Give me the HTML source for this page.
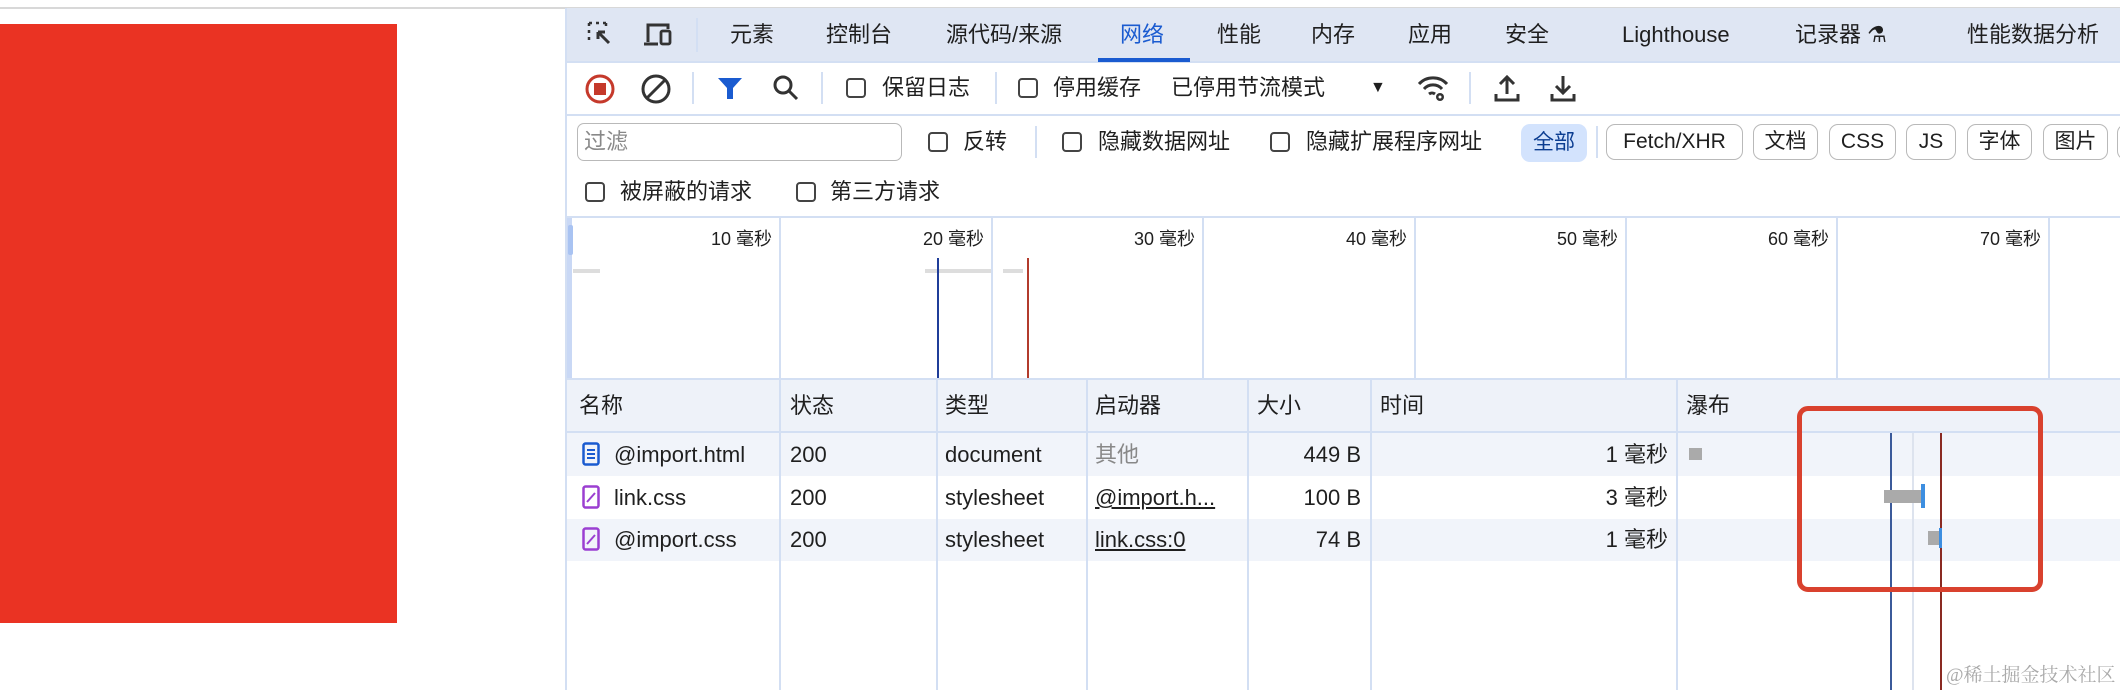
<!DOCTYPE html>
<html><head><meta charset="utf-8"><style>
*{margin:0;padding:0;box-sizing:border-box}
body{width:2120px;height:690px;overflow:hidden;background:#fff;position:relative;font-family:"Liberation Sans","Noto Sans CJK SC",sans-serif;color:#1f1f1f}
.a{position:absolute;white-space:nowrap}
.t{font-size:22px;line-height:30px}
.cb{position:absolute;width:20px;height:20px;border:2px solid #444;border-radius:4px;background:#fff}
.chip{position:absolute;top:124px;height:36px;border:1.5px solid #b9b9b9;border-radius:9px;font-size:21px;line-height:33px;text-align:center}
.vl{position:absolute;width:1.5px;background:#d3dff3}
.hl{position:absolute;height:2px;background:#d3dff3}
.sep{position:absolute;width:2px;background:#d3dff3}
.tl{position:absolute;top:225px;font-size:18px;text-align:right;width:120px}
</style></head><body>
<div class="hl" style="left:0;top:7px;width:2120px;height:1.5px;background:#d8d8d8"></div>
<div class="a" style="left:0;top:24px;width:397px;height:599px;background:#ea3323"></div>
<!-- devtools -->
<div class="a" style="left:565px;top:8px;width:1555px;height:682px;background:#fff;border-left:2px solid #d3dff3"></div>
<div class="a" style="left:567px;top:8px;width:1553px;height:54px;background:#dfe6f3"></div>
<div class="hl" style="left:567px;top:61px;width:1553px"></div>
<!-- tab icons -->
<svg class="a" style="left:586px;top:20px" width="30" height="30" viewBox="0 0 30 30"><path d="M3 3h3M10 3h3M17 3h3M3 3v3M3 10v3M3 17v3M20 3v3" stroke="#333" stroke-width="2.5" fill="none" stroke-dasharray="none"/><path d="M12 12l11 11M12 12h7M12 12v7" stroke="#333" stroke-width="3" fill="none"/></svg>
<svg class="a" style="left:642px;top:20px" width="32" height="30" viewBox="0 0 32 30"><path d="M6 22V5h20v4" stroke="#333" stroke-width="3" fill="none"/><path d="M2 24h14" stroke="#333" stroke-width="3"/><rect x="19" y="11" width="9" height="13" rx="1.5" stroke="#333" stroke-width="2.8" fill="none"/></svg>
<div class="sep" style="left:696px;top:18px;height:34px"></div>
<div class="a t" style="left:730px;top:20px">元素</div>
<div class="a t" style="left:826px;top:20px">控制台</div>
<div class="a t" style="left:946px;top:20px">源代码/来源</div>
<div class="a t" style="left:1120px;top:20px;color:#1a5bd0">网络</div>
<div class="a" style="left:1098px;top:58px;width:92px;height:4px;background:#1a5bd0"></div>
<div class="a t" style="left:1217px;top:20px">性能</div>
<div class="a t" style="left:1311px;top:20px">内存</div>
<div class="a t" style="left:1408px;top:20px">应用</div>
<div class="a t" style="left:1505px;top:20px">安全</div>
<div class="a t" style="left:1622px;top:20px">Lighthouse</div>
<div class="a t" style="left:1795px;top:20px">记录器 &#x2697;</div>
<div class="a t" style="left:1967px;top:20px">性能数据分析</div>
<!-- toolbar -->
<svg class="a" style="left:584px;top:73px" width="32" height="32" viewBox="0 0 32 32"><circle cx="16" cy="16" r="13" stroke="#c5392b" stroke-width="3" fill="none"/><rect x="10" y="10" width="12" height="12" fill="#c5392b"/></svg>
<svg class="a" style="left:640px;top:73px" width="32" height="32" viewBox="0 0 32 32"><circle cx="16" cy="16" r="13" stroke="#333" stroke-width="3" fill="none"/><path d="M7 25L25 7" stroke="#333" stroke-width="3"/></svg>
<div class="sep" style="left:692px;top:72px;height:32px"></div>
<svg class="a" style="left:716px;top:75px" width="28" height="28" viewBox="0 0 28 28"><path d="M2 3h24L17 13v11h-6V13z" fill="#1a5bd0"/></svg>
<svg class="a" style="left:771px;top:73px" width="30" height="30" viewBox="0 0 30 30"><circle cx="12" cy="12" r="8" stroke="#333" stroke-width="3" fill="none"/><path d="M18 18l8 8" stroke="#333" stroke-width="3"/></svg>
<div class="sep" style="left:821px;top:72px;height:32px"></div>
<div class="cb" style="left:846px;top:78px"></div>
<div class="a t" style="left:882px;top:73px">保留日志</div>
<div class="sep" style="left:995px;top:72px;height:32px"></div>
<div class="cb" style="left:1018px;top:78px"></div>
<div class="a t" style="left:1053px;top:73px">停用缓存</div>
<div class="a t" style="left:1171px;top:73px">已停用节流模式</div>
<div class="a" style="left:1370px;top:79px;font-size:16px">&#9660;</div>
<svg class="a" style="left:1416px;top:72px" width="34" height="32" viewBox="0 0 34 32"><path d="M3 12a19 19 0 0 1 28 0M8 17a12 12 0 0 1 18 0M13 22a5 5 0 0 1 6 0" stroke="#333" stroke-width="3" fill="none"/><circle cx="24" cy="25" r="4" fill="#333"/><circle cx="24" cy="25" r="1.5" fill="#fff"/></svg>
<div class="sep" style="left:1469px;top:72px;height:32px"></div>
<svg class="a" style="left:1494px;top:72px" width="26" height="32" viewBox="0 0 26 32"><path d="M13 22V5M6 12l7-7 7 7" stroke="#333" stroke-width="3" fill="none"/><path d="M2 22v6h22v-6" stroke="#333" stroke-width="3" fill="none"/></svg>
<svg class="a" style="left:1550px;top:72px" width="26" height="32" viewBox="0 0 26 32"><path d="M13 4v17M6 14l7 7 7-7" stroke="#333" stroke-width="3" fill="none"/><path d="M2 22v6h22v-6" stroke="#333" stroke-width="3" fill="none"/></svg>
<div class="hl" style="left:567px;top:114px;width:1553px"></div>
<!-- filter row -->
<div class="a" style="left:577px;top:123px;width:325px;height:38px;border:1.5px solid #b9b9b9;border-radius:7px"></div>
<div class="a t" style="left:584px;top:127px;color:#888">过滤</div>
<div class="cb" style="left:928px;top:132px"></div>
<div class="a t" style="left:963px;top:127px">反转</div>
<div class="sep" style="left:1035px;top:126px;height:32px"></div>
<div class="cb" style="left:1062px;top:132px"></div>
<div class="a t" style="left:1098px;top:127px">隐藏数据网址</div>
<div class="cb" style="left:1270px;top:132px"></div>
<div class="a t" style="left:1306px;top:127px">隐藏扩展程序网址</div>
<div class="a" style="left:1521px;top:124px;width:66px;height:38px;background:#d3e3fd;border-radius:9px;font-size:21px;line-height:38px;text-align:center;color:#0b3d91">全部</div>
<div class="sep" style="left:1596px;top:126px;height:32px"></div>
<div class="chip" style="left:1606px;width:137px">Fetch/XHR</div>
<div class="chip" style="left:1753px;width:65px">文档</div>
<div class="chip" style="left:1829px;width:67px">CSS</div>
<div class="chip" style="left:1906px;width:50px">JS</div>
<div class="chip" style="left:1967px;width:65px">字体</div>
<div class="chip" style="left:2043px;width:65px">图片</div>
<div class="chip" style="left:2117px;width:30px"></div>
<div class="cb" style="left:585px;top:182px"></div>
<div class="a t" style="left:620px;top:177px">被屏蔽的请求</div>
<div class="cb" style="left:796px;top:182px"></div>
<div class="a t" style="left:830px;top:177px">第三方请求</div>
<div class="hl" style="left:567px;top:216px;width:1553px"></div>
<!-- timeline -->
<div class="a" style="left:567px;top:218px;width:5px;height:160px;background:#c9d8f5"></div>
<div class="a" style="left:568px;top:225px;width:5px;height:30px;background:#a9c3f2;border-radius:2px"></div>
<div class="vl" style="left:779px;top:217px;height:161px"></div>
<div class="vl" style="left:991px;top:217px;height:161px"></div>
<div class="vl" style="left:1202px;top:217px;height:161px"></div>
<div class="vl" style="left:1414px;top:217px;height:161px"></div>
<div class="vl" style="left:1625px;top:217px;height:161px"></div>
<div class="vl" style="left:1836px;top:217px;height:161px"></div>
<div class="vl" style="left:2048px;top:217px;height:161px"></div>
<div class="tl" style="left:652px">10 毫秒</div>
<div class="tl" style="left:864px">20 毫秒</div>
<div class="tl" style="left:1075px">30 毫秒</div>
<div class="tl" style="left:1287px">40 毫秒</div>
<div class="tl" style="left:1498px">50 毫秒</div>
<div class="tl" style="left:1709px">60 毫秒</div>
<div class="tl" style="left:1921px">70 毫秒</div>
<div class="a" style="left:573px;top:269px;width:27px;height:4px;background:#ddd"></div>
<div class="a" style="left:925px;top:269px;width:66px;height:4px;background:#ddd"></div>
<div class="a" style="left:1003px;top:269px;width:20px;height:4px;background:#ddd"></div>
<div class="a" style="left:937px;top:258px;width:2px;height:120px;background:#1f3d99"></div>
<div class="a" style="left:1027px;top:258px;width:2px;height:120px;background:#b23b2c"></div>
<!-- table -->
<div class="a" style="left:567px;top:378px;width:1553px;height:55px;background:#eef2f9;border-top:2px solid #d3dff3;border-bottom:2px solid #d3dff3"></div>
<div class="a" style="left:567px;top:433px;width:1553px;height:43px;background:#f1f4fa"></div>
<div class="a" style="left:567px;top:519px;width:1553px;height:42px;background:#f1f4fa"></div>
<div class="vl" style="left:779px;top:378px;height:312px"></div>
<div class="vl" style="left:936px;top:378px;height:312px"></div>
<div class="vl" style="left:1086px;top:378px;height:312px"></div>
<div class="vl" style="left:1247px;top:378px;height:312px"></div>
<div class="vl" style="left:1370px;top:378px;height:312px"></div>
<div class="vl" style="left:1676px;top:378px;height:312px"></div>
<div class="a t" style="left:579px;top:391px">名称</div>
<div class="a t" style="left:790px;top:391px">状态</div>
<div class="a t" style="left:945px;top:391px">类型</div>
<div class="a t" style="left:1095px;top:391px">启动器</div>
<div class="a t" style="left:1257px;top:391px">大小</div>
<div class="a t" style="left:1380px;top:391px">时间</div>
<div class="a t" style="left:1686px;top:391px">瀑布</div>
<!-- row icons -->
<svg class="a" style="left:582px;top:442px" width="18" height="24" viewBox="0 0 18 24"><rect x="1.5" y="1.5" width="15" height="21" rx="2" stroke="#1a5bd0" stroke-width="2.5" fill="none"/><path d="M5 8h8M5 12h8M5 16h8" stroke="#1a5bd0" stroke-width="2"/></svg>
<svg class="a" style="left:582px;top:485px" width="18" height="24" viewBox="0 0 18 24"><rect x="1.5" y="1.5" width="15" height="21" rx="2" stroke="#9b3fd1" stroke-width="2.5" fill="none"/><path d="M5 17l8-9" stroke="#9b3fd1" stroke-width="2"/></svg>
<svg class="a" style="left:582px;top:527px" width="18" height="24" viewBox="0 0 18 24"><rect x="1.5" y="1.5" width="15" height="21" rx="2" stroke="#9b3fd1" stroke-width="2.5" fill="none"/><path d="M5 17l8-9" stroke="#9b3fd1" stroke-width="2"/></svg>
<div class="a t" style="left:614px;top:440px">@import.html</div>
<div class="a t" style="left:614px;top:483px">link.css</div>
<div class="a t" style="left:614px;top:525px">@import.css</div>
<div class="a t" style="left:790px;top:440px">200</div>
<div class="a t" style="left:790px;top:483px">200</div>
<div class="a t" style="left:790px;top:525px">200</div>
<div class="a t" style="left:945px;top:440px">document</div>
<div class="a t" style="left:945px;top:483px">stylesheet</div>
<div class="a t" style="left:945px;top:525px">stylesheet</div>
<div class="a t" style="left:1095px;top:440px;color:#888">其他</div>
<div class="a t" style="left:1095px;top:483px;text-decoration:underline">@import.h...</div>
<div class="a t" style="left:1095px;top:525px;text-decoration:underline">link.css:0</div>
<div class="a t" style="left:1200px;top:440px;width:161px;text-align:right">449 B</div>
<div class="a t" style="left:1200px;top:483px;width:161px;text-align:right">100 B</div>
<div class="a t" style="left:1200px;top:525px;width:161px;text-align:right">74 B</div>
<div class="a t" style="left:1460px;top:440px;width:208px;text-align:right">1 毫秒</div>
<div class="a t" style="left:1460px;top:483px;width:208px;text-align:right">3 毫秒</div>
<div class="a t" style="left:1460px;top:525px;width:208px;text-align:right">1 毫秒</div>
<!-- waterfall -->
<div class="a" style="left:1890px;top:433px;width:2px;height:257px;background:#3b5a9a"></div>
<div class="a" style="left:1912px;top:433px;width:1.5px;height:257px;background:#dde3ee"></div>
<div class="a" style="left:1940px;top:433px;width:2px;height:257px;background:#8a2a22"></div>
<div class="a" style="left:1689px;top:448px;width:13px;height:12px;background:#aaa"></div>
<div class="a" style="left:1884px;top:490px;width:37px;height:13px;background:#aaa"></div>
<div class="a" style="left:1921px;top:484px;width:4px;height:24px;background:#3d8ee0"></div>
<div class="a" style="left:1928px;top:531px;width:11px;height:14px;background:#aaa"></div>
<div class="a" style="left:1939px;top:528px;width:3px;height:20px;background:#3d8ee0"></div>
<div class="a" style="left:1797px;top:406px;width:246px;height:186px;border:5px solid #d9412e;border-radius:11px"></div>
<div class="a" style="left:1946px;top:660px;font-size:19px;color:#aaa;font-family:'Liberation Serif','Noto Serif CJK SC',serif">@稀土掘金技术社区</div>
</body></html>
